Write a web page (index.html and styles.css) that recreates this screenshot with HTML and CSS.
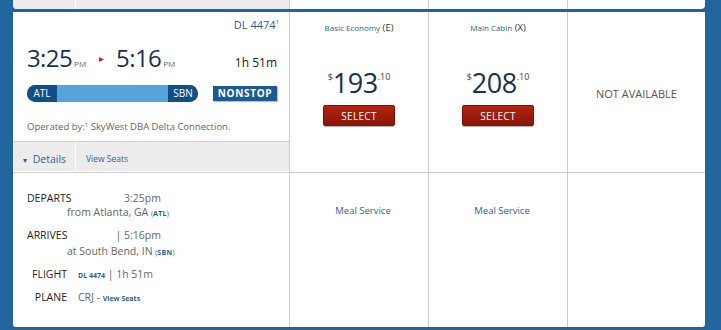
FILE: index.html
```html
<!DOCTYPE html>
<html lang="en">
<head>
    <meta charset="UTF-8">
    <meta name="viewport" content="width=device-width, initial-scale=1.0">
    <title>Flight Results</title>
    <link rel="stylesheet" href="styles.css">
</head>
<body>
    <div class="page">
        <!-- tail of the previous result -->
        <div class="prev">
            <div class="prev-left"><span class="prev-a"></span><span class="prev-b"></span></div>
            <div class="prev-cell"></div>
            <div class="prev-cell"></div>
            <div class="prev-cell"></div>
        </div>

        <div class="card">
            <!-- Flight summary -->
            <div class="summary">
                <div class="flight">
                    <div class="flight-num">DL 4474<sup>1</sup></div>
                    <div class="times">
                        <span class="time">3:25</span><span class="ampm">PM</span>
                        <span class="arrow">&#9656;</span>
                        <span class="time">5:16</span><span class="ampm">PM</span>
                        <span class="duration">1h 51m</span>
                    </div>
                    <div class="route-row">
                        <div class="route">
                            <span class="route-end">ATL</span>
                            <span class="route-line"></span>
                            <span class="route-end">SBN</span>
                        </div>
                        <span class="nonstop">NONSTOP</span>
                    </div>
                    <div class="operated">Operated by:<sup>1</sup> SkyWest DBA Delta Connection.</div>
                </div>
                <div class="details-bar">
                    <span class="details-toggle"><span class="caret">&#9662;</span> Details</span>
                    <span class="view-seats">View Seats</span>
                </div>
            </div>

            <div class="fare">
                <div class="fare-name"><span class="fare-link">Basic Economy</span> (E)</div>
                <div class="price"><sup>$</sup>193<sup>.10</sup></div>
                <button class="select-btn">SELECT</button>
            </div>
            <div class="fare">
                <div class="fare-name"><span class="fare-link">Main Cabin</span> (X)</div>
                <div class="price"><sup>$</sup>208<sup>.10</sup></div>
                <button class="select-btn">SELECT</button>
            </div>
            <div class="fare fare-na">
                <div class="not-available">NOT AVAILABLE</div>
            </div>

            <!-- Expanded details -->
            <div class="info">
                <div class="info-row">
                    <span class="info-label">DEPARTS</span>
                    <span class="info-time">3:25pm</span>
                </div>
                <div class="info-sub">from Atlanta, GA <span class="code">(<b>ATL</b>)</span></div>
                <div class="info-row">
                    <span class="info-label">ARRIVES</span>
                    <span class="info-time">| 5:16pm</span>
                </div>
                <div class="info-sub sub-2">at South Bend, IN <span class="code">(<b>SBN</b>)</span></div>
                <div class="info-row info-short">
                    <span class="info-label">FLIGHT</span>
                    <span class="info-val"><span class="mini-link">DL 4474</span> | 1h 51m</span>
                </div>
                <div class="info-row info-short">
                    <span class="info-label">PLANE</span>
                    <span class="info-val">CRJ - <span class="mini-link">View Seats</span></span>
                </div>
            </div>
            <div class="meal"><span>Meal Service</span></div>
            <div class="meal"><span>Meal Service</span></div>
            <div class="meal"></div>
        </div>
    </div>
</body>
</html>
```

FILE: styles.css
```css
body {
    margin: 0;
    background: #22659c;
    font-family: "Open Sans", Arial, sans-serif;
    color: #333;
}
.page {
    padding: 0 16px 0 13px;
}
.prev {
    display: grid;
    grid-template-columns: 276px 139px 139px 1fr;
    height: 9px;
    background: #fff;
    border-radius: 0 0 4px 4px;
    overflow: hidden;
    margin-bottom: 3px;
}
.prev-left {
    display: flex;
    background: #ececec;
}
.prev-a {
    width: 62px;
}
.prev-b {
    flex: 1;
    border-left: 1px solid #fff;
}
.prev-cell {
    border-left: 1px solid #cfcfcf;
}
.card {
    display: grid;
    grid-template-columns: 276px 139px 139px 1fr;
    grid-template-rows: 160px 155px;
    background: #fff;
    border-radius: 0 0 3px 3px;
}

/* summary cell */
.summary {
    display: flex;
    flex-direction: column;
}
.flight {
    height: 129px;
    padding: 0 12px 0 14px;
    border-bottom: 1px solid #d0d0d0;
}
.flight-num {
    margin-top: 6px;
    text-align: right;
    font-size: 11px;
    line-height: 14px;
    color: #2f5f95;
    margin-right: -2px;
}
.flight-num sup {
    font-size: 6px;
    vertical-align: 5px;
    line-height: 0;
}
.times {
    display: flex;
    align-items: baseline;
    margin-top: 11px;
    height: 30px;
    line-height: 30px;
}
.time {
    font-size: 24px;
    letter-spacing: -0.6px;
    color: #17324f;
}
.ampm {
    font-size: 8px;
    color: #5b6b7c;
    margin-left: 2px;
}
.arrow {
    font-size: 10px;
    color: #c0213a;
    margin: 0 12px 0 13px;
    position: relative;
    top: -5px;
}
.duration {
    margin-left: auto;
    font-size: 12px;
    color: #222;
}
.route-row {
    display: flex;
    align-items: center;
    margin-top: 12px;
}
.route {
    display: flex;
    width: 171px;
    height: 17px;
    border-radius: 9px;
    overflow: hidden;
    background: #55a5dc;
}
.route-end {
    width: 30px;
    background: #0f4f87;
    color: #fff;
    font-size: 10px;
    line-height: 17px;
    text-align: center;
}
.route-line {
    flex: 1;
}
.nonstop {
    margin-left: auto;
    width: 64px;
    height: 15px;
    line-height: 15px;
    background: #1e5a92;
    color: #fff;
    font-size: 10px;
    font-weight: bold;
    letter-spacing: 0.7px;
    text-align: center;
    box-shadow: 1px 1px 1px rgba(0,0,0,0.25);
}
.operated {
    margin-top: 18px;
    font-size: 9.5px;
    color: #666;
    line-height: 13px;
}
.operated sup {
    font-size: 6px;
    vertical-align: 3px;
    line-height: 0;
}
.details-bar {
    display: flex;
    height: 29px;
    background: #ececec;
}
.details-toggle {
    width: 52px;
    padding: 10px 0 0 10px;
    border-right: 1px solid #fff;
    font-size: 10.5px;
    color: #2f5f95;
}
.caret {
    font-size: 8px;
    margin-right: 3px;
}
.view-seats {
    padding: 11px 0 0 10px;
    font-size: 8.5px;
    color: #2f5f95;
}

/* fare columns */
.fare {
    border-left: 1px solid #cfcfcf;
    display: flex;
    flex-direction: column;
    align-items: center;
}
.fare-name {
    margin-top: 9px;
    font-size: 9.5px;
    line-height: 14px;
    color: #333;
}
.fare-link {
    font-size: 8px;
    color: #2f5f95;
}
.price {
    margin-top: 32px;
    font-size: 27px;
    line-height: 32px;
    color: #17324f;
    letter-spacing: -0.5px;
}
.price sup {
    font-size: 9px;
    vertical-align: 13px;
    line-height: 0;
    color: #444;
    letter-spacing: 0;
}
.select-btn {
    margin-top: 6px;
    width: 72px;
    height: 21px;
    border: 1px solid #7a1205;
    border-radius: 2px;
    background: linear-gradient(#b3220f, #8b1608);
    color: #fff;
    font-family: inherit;
    font-size: 10px;
    letter-spacing: 0.3px;
    padding: 0;
    box-shadow: 0 1px 1px rgba(0,0,0,0.3);
}
.fare-na {
    justify-content: center;
}
.not-available {
    font-size: 11px;
    color: #555;
    margin-top: 2px;
}

/* expanded details */
.info {
    border-top: 1px solid #cfcfcf;
    padding: 18px 0 0 14px;
    font-size: 10.5px;
    color: #666;
}
.info-row {
    display: flex;
    width: 134px;
    justify-content: space-between;
    line-height: 14px;
}
.info-label {
    width: 40px;
    text-align: right;
    color: #222;
}
.info-sub {
    padding-left: 40px;
    line-height: 14px;
    margin-bottom: 7px;
}
.sub-2 {
    margin-top: 2px;
}
.code {
    font-size: 7px;
    color: #2f5f95;
}
.code b {
    letter-spacing: 0.3px;
}
.info-short {
    justify-content: flex-start;
    margin-bottom: 7px;
    width: auto;
}
.info-val {
    margin-left: 11px;
}
.mini-link {
    font-size: 7px;
    font-weight: bold;
    color: #2f5f95;
}
.meal {
    border-top: 1px solid #cfcfcf;
    border-left: 1px solid #cfcfcf;
    text-align: center;
    padding: 31px 0 0 8px;
    font-size: 9.5px;
    color: #2f5f95;
}
```
